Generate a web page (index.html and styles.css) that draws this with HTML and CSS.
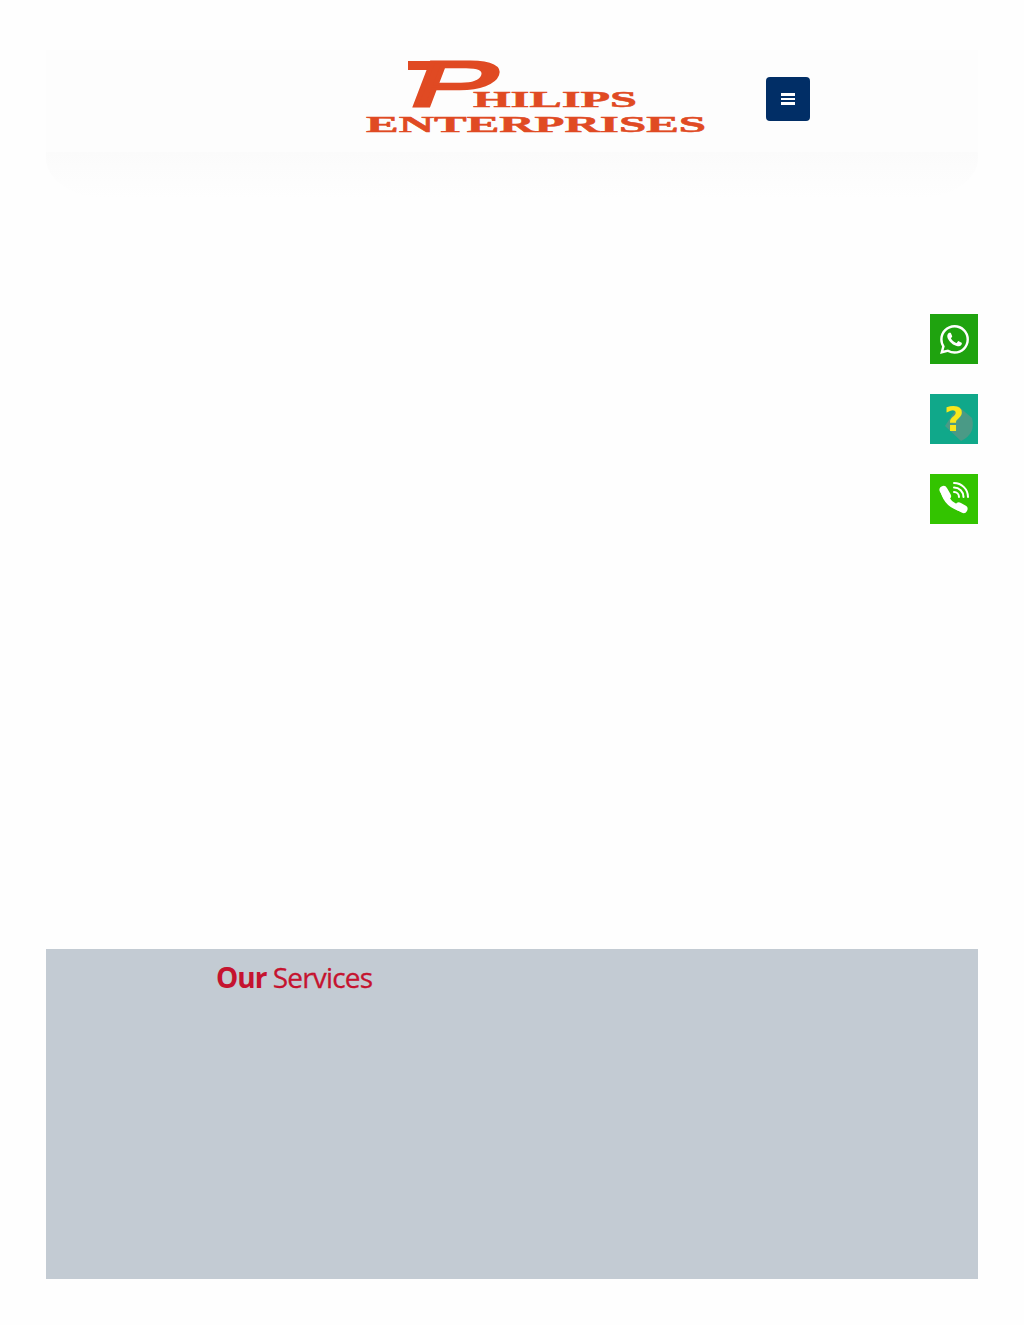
FILE: index.html
```html
<!DOCTYPE html>
<html lang="en">
<head>
<meta charset="utf-8">
<title>Philips Enterprises</title>
<link rel="stylesheet" href="styles.css">
</head>
<body>
<div class="page">
  <header class="header">
    <a class="logo" href="#" aria-label="Philips Enterprises">
      <svg class="logo-svg" viewBox="0 0 340 75" width="340" height="75">
        <path class="logo-bar" d="M42 1H78L75 10H42Z"/>
        <text class="logo-p" transform="translate(39 45.5) skewX(-21) scale(2.02 1)" x="0" y="0">P</text>
        <text class="logo-text" x="107" y="47" font-size="24" textLength="164" lengthAdjust="spacingAndGlyphs">HILIPS</text>
        <text class="logo-text" x="0" y="72" font-size="23" textLength="340" lengthAdjust="spacingAndGlyphs">ENTERPRISES</text>
      </svg>
    </a>
    <button class="menu-btn" type="button" aria-label="Menu">
      <span class="bar"></span><span class="bar"></span><span class="bar"></span>
    </button>
  </header>
  <div class="hero"></div>
  <section class="services">
    <h2 class="services-title"><strong>Our</strong> <span class="services-word">Services</span></h2>
  </section>
</div>
<aside class="float-bar">
  <a class="float-btn whatsapp" href="#" aria-label="WhatsApp">
    <svg viewBox="0 0 24 24" width="29" height="29"><path fill="#fff" d="M17.472 14.382c-.297-.149-1.758-.867-2.03-.967-.273-.099-.471-.148-.67.15-.197.297-.767.966-.94 1.164-.173.199-.347.223-.644.075-.297-.15-1.255-.463-2.39-1.475-.883-.788-1.48-1.761-1.653-2.059-.173-.297-.018-.458.13-.606.134-.133.298-.347.446-.52.149-.174.198-.298.298-.497.099-.198.05-.371-.025-.52-.075-.149-.669-1.612-.916-2.207-.242-.579-.487-.5-.669-.51-.173-.008-.371-.01-.57-.01-.198 0-.52.074-.792.372-.272.297-1.04 1.016-1.04 2.479 0 1.462 1.065 2.875 1.213 3.074.149.198 2.096 3.2 5.077 4.487.709.306 1.262.489 1.694.625.712.227 1.36.195 1.871.118.571-.085 1.758-.719 2.006-1.413.248-.694.248-1.289.173-1.413-.074-.124-.272-.198-.57-.347m-5.421 7.403h-.004a9.87 9.87 0 01-5.031-1.378l-.361-.214-3.741.982.998-3.648-.235-.374a9.86 9.86 0 01-1.51-5.26c.001-5.45 4.436-9.884 9.888-9.884 2.64 0 5.122 1.03 6.988 2.898a9.825 9.825 0 012.893 6.994c-.003 5.45-4.437 9.884-9.885 9.884m8.413-18.297A11.815 11.815 0 0012.05 0C5.495 0 .16 5.335.157 11.892c0 2.096.547 4.142 1.588 5.945L.057 24l6.305-1.654a11.882 11.882 0 005.683 1.448h.005c6.554 0 11.89-5.335 11.893-11.893a11.821 11.821 0 00-3.48-8.413z"/></svg>
  </a>
  <a class="float-btn enquiry" href="#" aria-label="Enquiry">
    <svg class="enquiry-shade" viewBox="0 0 48 50" width="48" height="50"><path fill="#4a9a86" d="M15 32 L28 12 L42 24 Q46 40 31 47 Z"/></svg>
    <span class="question">?</span>
  </a>
  <a class="float-btn call" href="#" aria-label="Call">
    <svg viewBox="0 0 48 50" width="48" height="50" fill="none" stroke="#fff" stroke-linecap="round">
      <path stroke-width="8" d="M13.5 16 L17 22"/>
      <path stroke-width="8" d="M29 32.5 L33.5 35"/>
      <path stroke-width="5.5" d="M13.5 18 Q17 31 32 35"/>
      <path stroke-width="2" d="M24 18 A5 5 0 0 1 29 23"/>
      <path stroke-width="2" d="M24 13.5 A9.5 9.5 0 0 1 33.5 23"/>
      <path stroke-width="2" d="M24 9 A14 14 0 0 1 38 23"/>
    </svg>
  </a>
</aside>
</body>
</html>
```
FILE: styles.css
```css
* { box-sizing: border-box; }
html, body { margin: 0; padding: 0; }
body {
  background: #fefefe;
  font-family: "Open Sans", "Liberation Sans", sans-serif;
  height: 1325px;
  overflow: hidden;
}
.page {
  padding: 50px 46px 0;
}
.header {
  position: relative;
  height: 102px;
  background: #fdfdfd;
  display: flex;
  align-items: flex-start;
  padding-left: 320px;
  gap: 60px;
}
.header::after {
  content: "";
  position: absolute;
  left: 0;
  right: 0;
  top: 100%;
  height: 46px;
  background: linear-gradient(#fbfbfb, #fefefe);
  border-radius: 0 0 60px 60px / 0 0 40px 40px;
}
.logo { display: block; margin-top: 10px; line-height: 0; }
.logo-svg { display: block; overflow: visible; }
.logo-bar { fill: #e04a23; }
.logo-p {
  font-family: "Liberation Sans", sans-serif;
  font-weight: 400;
  font-size: 64px;
  fill: #e04a23;
  stroke: #e04a23;
  stroke-width: 2.8px;
}
.logo-text {
  font-family: "Liberation Serif", serif;
  font-weight: 700;
  fill: #e04a23;
  stroke: #e04a23;
  stroke-width: 0.5px;
}
.menu-btn {
  width: 44px;
  height: 44px;
  margin-top: 27px;
  border: 0;
  padding: 0;
  border-radius: 4px;
  background: #012e66;
  display: flex;
  flex-direction: column;
  align-items: center;
  justify-content: center;
  gap: 2px;
}
.bar { display: block; width: 14px; height: 2.5px; background: #fff; }
.hero { height: 797px; }
.services {
  height: 330px;
  background: #c3cbd3;
  padding: 7px 0 0 170px;
}
.services-title {
  margin: 0;
  font-size: 28px;
  line-height: 42px;
  font-weight: 400;
  letter-spacing: -1px;
  color: #c5132f;
}
.services-title strong { font-weight: 700; }
.services-word {
  letter-spacing: -0.8px;
  -webkit-text-stroke: 0.3px #c5132f;
}
.float-bar {
  position: fixed;
  top: 314px;
  right: 46px;
  display: flex;
  flex-direction: column;
  gap: 30px;
}
.float-btn {
  position: relative;
  width: 48px;
  height: 50px;
  display: flex;
  align-items: center;
  justify-content: center;
  overflow: hidden;
  text-decoration: none;
}
.whatsapp { background: #1fa30f; }
.enquiry { background: #10a88a; }
.call { background: #33c400; }
.enquiry-shade { position: absolute; left: 0; top: 0; }
.question {
  position: relative;
  font-family: "DejaVu Sans", sans-serif;
  font-weight: 700;
  font-size: 34px;
  line-height: 1;
  color: #f8e71c;
}
```
